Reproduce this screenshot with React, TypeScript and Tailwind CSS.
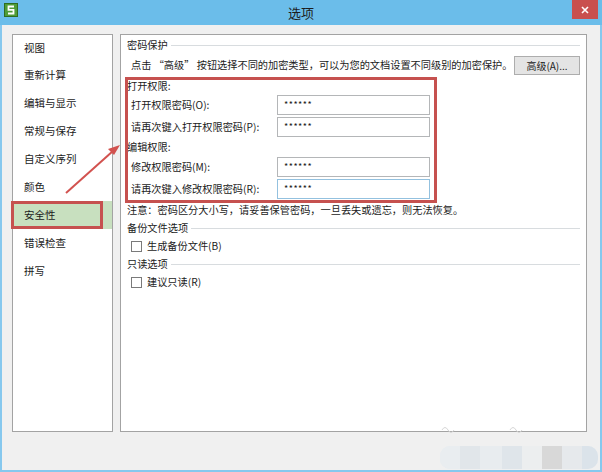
import React from "react"

const items = ["视图", "重新计算", "编辑与显示", "常规与保存", "自定义序列", "颜色", "安全性", "错误检查", "拼写"]

function SectionHead({ title }: { title: string }) {
  return (
    <div className="flex h-[16px] items-center">
      <span>{title}</span>
      <div className="ml-[3px] h-px flex-1 bg-[#d8dcdf]" />
    </div>
  )
}

function PwdRow({ label, focused }: { label: string; focused?: boolean }) {
  return (
    <div className="flex h-[20px] items-center pl-[4px]">
      <span className="w-[146px] whitespace-nowrap">{label}</span>
      <div
        className={
          focused
            ? "flex h-[20px] w-[153px] items-center border border-[#93c1df] bg-white pl-[6px] text-[9px] tracking-[0.5px]"
            : "flex h-[20px] w-[153px] items-center border border-[#b4b6b8] bg-white pl-[6px] text-[9px] tracking-[0.5px]"
        }
      >
        ******
      </div>
    </div>
  )
}

function Check({ label }: { label: string }) {
  return (
    <div className="flex h-[16px] items-center pl-[4px]">
      <div className="h-[11px] w-[11px] border border-[#7a7a7a] bg-white" />
      <span className="ml-[5px]">{label}</span>
    </div>
  )
}

export default function App() {
  return (
    <div
      className="relative flex h-[472px] w-[602px] flex-col bg-[#86c8ee] text-[#1b1b1b]"
      style={{ fontFamily: '"Noto Sans CJK SC", "Noto Sans", sans-serif' }}
    >
      {/* title bar */}
      <div className="relative flex h-[25px] items-center justify-center bg-[#6bbdea]">
        <svg className="absolute left-[4px] top-[3px]" width="14" height="14" viewBox="0 0 14 14">
          <rect x="0.5" y="0.5" width="13" height="13" fill="#4f9d37" stroke="#2f6d20" />
          <path d="M10 3.5H4.5V6.8H9.5V10.5H4" fill="none" stroke="#ffffff" strokeWidth="1.8" />
        </svg>
        <span className="text-[13px] text-[#1d1d1d]">选项</span>
        <div className="absolute right-[4px] top-0 flex h-[19px] w-[26px] items-center justify-center bg-[#c9504f]">
          <svg width="8" height="8" viewBox="0 0 8 8">
            <path d="M1 1L7 7M7 1L1 7" stroke="#ffffff" strokeWidth="1.6" />
          </svg>
        </div>
      </div>

      {/* body */}
      <div className="mx-[2px] mb-[2px] flex flex-1 gap-[7px] bg-[#f0f0f0] px-[10px] pt-[9px]">
        {/* left list */}
        <div className="h-[398px] w-[101px] border border-[#a3a3a3] bg-white text-[10.5px]">
          {items.map((it, i) => (
            <div
              key={it}
              className={
                (i === 0 ? "h-[26px] " : "h-[28px] ") +
                (it === "安全性" ? "bg-[#c8e0bf] " : "") +
                "flex items-center pl-[11px]"
              }
            >
              {it}
            </div>
          ))}
        </div>

        {/* right panel */}
        <div className="flex h-[398px] w-[467px] flex-col border border-[#a3a3a3] bg-white pl-[6px] pr-[6px] pt-[2px] text-[10.2px]">
          <SectionHead title="密码保护" />
          <div className="mt-[2px] flex h-[20px] items-center justify-between">
            <span className="pl-[4px] whitespace-nowrap">点击 “高级” 按钮选择不同的加密类型，可以为您的文档设置不同级别的加密保护。</span>
            <div className="flex h-[19px] w-[66px] items-center justify-center border border-[#adadad] bg-[#e4e4e4] text-[10px]">
              高级(A)...
            </div>
          </div>
          <div className="mt-[2px] flex h-[17px] items-center">打开权限:</div>
          <div className="mt-[1px]">
            <PwdRow label="打开权限密码(O):" />
          </div>
          <div className="mt-[2px]">
            <PwdRow label="请再次键入打开权限密码(P):" />
          </div>
          <div className="flex h-[20px] items-center">编辑权限:</div>
          <PwdRow label="修改权限密码(M):" />
          <div className="mt-[2px]">
            <PwdRow label="请再次键入修改权限密码(R):" focused />
          </div>
          <div className="mt-[3px] flex h-[16px] items-center">注意：密码区分大小写，请妥善保管密码，一旦丢失或遗忘，则无法恢复。</div>
          <div className="mt-[2px]">
            <SectionHead title="备份文件选项" />
          </div>
          <div className="mt-[2px]">
            <Check label="生成备份文件(B)" />
          </div>
          <div className="mt-[2px]">
            <SectionHead title="只读选项" />
          </div>
          <div className="mt-[2px]">
            <Check label="建议只读(R)" />
          </div>
        </div>
      </div>

      {/* annotation overlays */}
      <div className="pointer-events-none absolute left-[11px] top-[201px] h-[28px] w-[92px] border-[3px] border-[#c6514f]" />
      <div className="pointer-events-none absolute left-[125px] top-[77px] h-[126px] w-[312px] border-[3px] border-[#c6514f]" />
      <svg className="pointer-events-none absolute left-0 top-0" width="602" height="472">
        <line x1="66" y1="193" x2="113" y2="151" stroke="#d2524f" strokeWidth="2" />
        <polygon points="120,145 108,149 114,155" fill="#d2524f" />
        <path d="M442 430q3-5 6 0t6 0" fill="none" stroke="#d6d6d6" strokeWidth="1" />
        <path d="M510 430q3-5 6 0t6 0" fill="none" stroke="#d6d6d6" strokeWidth="1" />
      </svg>

      {/* blurred watermark */}
      <div className="pointer-events-none absolute left-[440px] top-[446px] flex h-[23px] w-[158px] overflow-hidden rounded-[10px] bg-[#e6ebef]">
        <div className="w-[20px] bg-[#e9edf0]" />
        <div className="w-[20px] bg-[#e1e6ea]" />
        <div className="w-[22px] bg-[#e8ecef]" />
        <div className="w-[20px] bg-[#dfe5ea]" />
        <div className="w-[20px] bg-[#eceeef]" />
        <div className="w-[20px] bg-[#d8d8d8]" />
        <div className="w-[20px] bg-[#e6e9ec]" />
        <div className="flex-1 bg-[#dbe3ea]" />
      </div>
    </div>
  )
}
